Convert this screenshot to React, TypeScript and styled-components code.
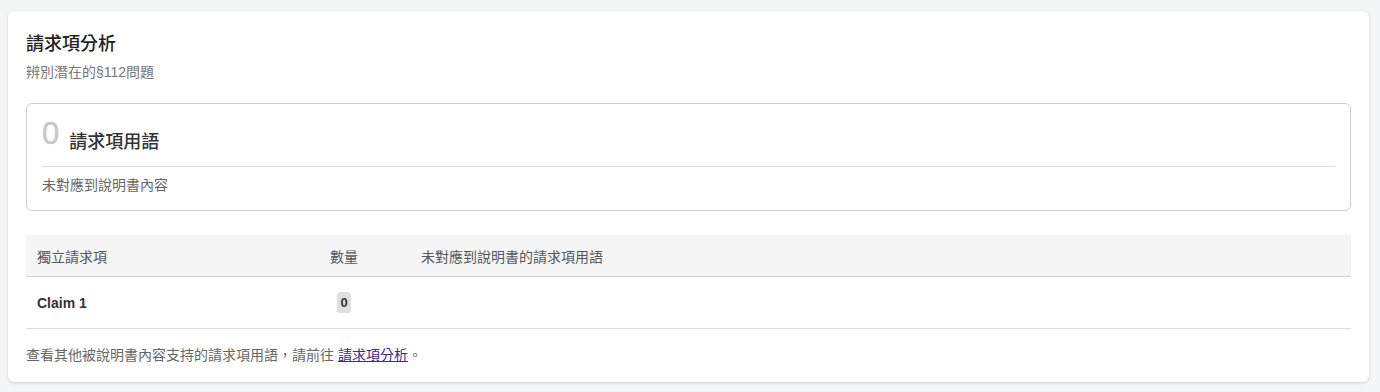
import React from "react";
import styled, { createGlobalStyle } from "styled-components";

const GlobalStyle = createGlobalStyle`
  html, body {
    margin: 0;
    padding: 0;
    background: #f4f5f9;
  }
  body {
    font-family: "Liberation Sans", Arial, "Noto Sans CJK TC", sans-serif;
    color: #333;
  }
  #root {
    padding: 11px 11px 10px 8px;
  }
`;

const Card = styled.section`
  background: #fff;
  border-radius: 6px;
  box-shadow: 0 1px 3px rgba(0, 0, 0, 0.16), 0 0 1px rgba(0, 0, 0, 0.06);
  padding: 19px 18px 14px 18px;
  height: 371px;
  box-sizing: border-box;
`;

const Title = styled.h2`
  margin: 0;
  font-size: 18px;
  font-weight: 500;
  line-height: 28px;
  color: #222;
`;

const Subtitle = styled.p`
  margin: 2px 0 0 0;
  font-size: 14px;
  line-height: 24px;
  color: #777;
`;

const SummaryBox = styled.div`
  margin-top: 19px;
  border: 1px solid #cfcfcf;
  border-radius: 6px;
  padding: 7px 15px 13px 15px;
`;

const SummaryHead = styled.div`
  display: flex;
  align-items: center;
  gap: 10px;
  padding-bottom: 10px;
  border-bottom: 1px solid #dcdcdc;
`;

const BigCount = styled.span`
  font-family: "Liberation Sans", Arial, sans-serif;
  font-size: 31px;
  line-height: 32px;
  color: #c8c8c8;
  font-weight: 400;
  -webkit-text-stroke: 0.5px #c8c8c8;
`;

const SummaryLabel = styled.span`
  font-size: 18px;
  font-weight: 500;
  color: #333;
  line-height: 28px;
  margin-top: 17px;
`;

const SummaryNote = styled.div`
  margin-top: 6px;
  font-size: 14px;
  line-height: 24px;
  color: #666;
`;

const Table = styled.div`
  margin-top: 24px;
  display: grid;
  grid-template-columns: 252px 132px 1fr;
`;

const HeadCell = styled.div<{ $center?: boolean }>`
  background: #f5f5f5;
  height: 41px;
  display: flex;
  align-items: center;
  justify-content: ${(p) => (p.$center ? "center" : "flex-start")};
  padding: 0 11px;
  font-size: 14px;
  color: #555;
  border-bottom: 1px solid #cfcfcf;
`;

const BodyCell = styled.div<{ $center?: boolean }>`
  height: 51px;
  display: flex;
  align-items: center;
  justify-content: ${(p) => (p.$center ? "center" : "flex-start")};
  padding: 0 11px;
  font-size: 14px;
  font-weight: 700;
  color: #333;
  border-bottom: 1px solid #dcdcdc;
`;

const Badge = styled.span`
  display: inline-flex;
  align-items: center;
  justify-content: center;
  min-width: 14px;
  height: 21px;
  padding: 0 3px;
  box-sizing: border-box;
  background: #e0e0e0;
  border-radius: 3px;
  font-size: 13px;
  font-weight: 700;
  color: #333;
`;

const Footer = styled.p`
  margin: 14px 0 0 0;
  font-size: 14px;
  line-height: 24px;
  color: #666;
`;

const Link = styled.a`
  color: #3a2a92;
  text-decoration: underline;
`;

export default function App() {
  return (
    <>
      <GlobalStyle />
      <Card>
        <Title>請求項分析</Title>
        <Subtitle>辨別潛在的§112問題</Subtitle>
        <SummaryBox>
          <SummaryHead>
            <BigCount>0</BigCount>
            <SummaryLabel>請求項用語</SummaryLabel>
          </SummaryHead>
          <SummaryNote>未對應到說明書內容</SummaryNote>
        </SummaryBox>
        <Table>
          <HeadCell>獨立請求項</HeadCell>
          <HeadCell $center>數量</HeadCell>
          <HeadCell>未對應到說明書的請求項用語</HeadCell>
          <BodyCell>Claim 1</BodyCell>
          <BodyCell $center>
            <Badge>0</Badge>
          </BodyCell>
          <BodyCell />
        </Table>
        <Footer>
          查看其他被說明書內容支持的請求項用語，請前往 <Link href="#">請求項分析</Link>。
        </Footer>
      </Card>
    </>
  );
}
